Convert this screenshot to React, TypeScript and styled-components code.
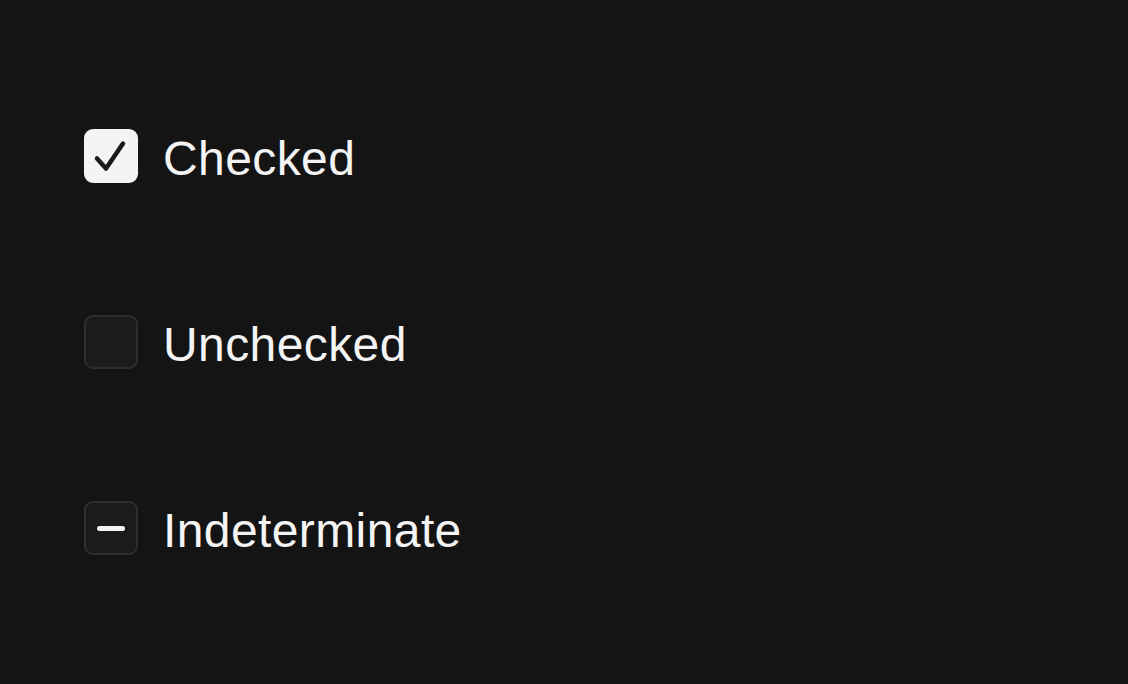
import styled, { createGlobalStyle } from 'styled-components';

const GlobalStyle = createGlobalStyle`
  html, body {
    margin: 0;
    padding: 0;
    background: #141414;
  }
  body {
    font-family: 'Liberation Sans', Arial, sans-serif;
    color: #f4f4f4;
  }
`;

const Page = styled.main`
  min-height: 684px;
  box-sizing: border-box;
  padding: 129px 84px 0;
  display: flex;
  flex-direction: column;
  gap: 132px;
`;

const Row = styled.label`
  display: flex;
  align-items: center;
  height: 54px;
  gap: 25px;
  cursor: pointer;
`;

type BoxState = 'checked' | 'unchecked' | 'indeterminate';

const Box = styled.span<{ $state: BoxState }>`
  position: relative;
  width: 54px;
  height: 54px;
  box-sizing: border-box;
  border-radius: 9px;
  flex-shrink: 0;
  display: flex;
  align-items: center;
  justify-content: center;
  background: ${({ $state }) => ($state === 'checked' ? '#f4f4f4' : '#1b1b1b')};
  border: 2px solid ${({ $state }) => ($state === 'checked' ? '#f4f4f4' : '#2e2e2e')};
`;

const Text = styled.span`
  font-size: 48px;
  line-height: 42px;
  letter-spacing: 0.4px;
  padding-top: 6px;
  color: #f4f4f4;
`;

const CheckSvg = styled.svg`
  position: absolute;
  inset: -2px;
`;

const CheckMark = () => (
  <CheckSvg width="54" height="54" viewBox="0 0 54 54" fill="none">
    <path
      d="M13 29.5 L22 39.5 L39 14.5"
      stroke="#1a1a1a"
      strokeWidth="4.5"
      strokeLinecap="round"
      strokeLinejoin="round"
    />
  </CheckSvg>
);

const Dash = styled.span`
  width: 28px;
  height: 5px;
  border-radius: 3px;
  background: #f4f4f4;
`;

const Checkbox = ({ state, label }: { state: BoxState; label: string }) => (
  <Row>
    <Box $state={state} role="checkbox" aria-checked={state === 'indeterminate' ? 'mixed' : state === 'checked'}>
      {state === 'checked' && <CheckMark />}
      {state === 'indeterminate' && <Dash />}
    </Box>
    <Text>{label}</Text>
  </Row>
);

const App = () => (
  <>
    <GlobalStyle />
    <Page>
      <Checkbox state="checked" label="Checked" />
      <Checkbox state="unchecked" label="Unchecked" />
      <Checkbox state="indeterminate" label="Indeterminate" />
    </Page>
  </>
);

export default App;
